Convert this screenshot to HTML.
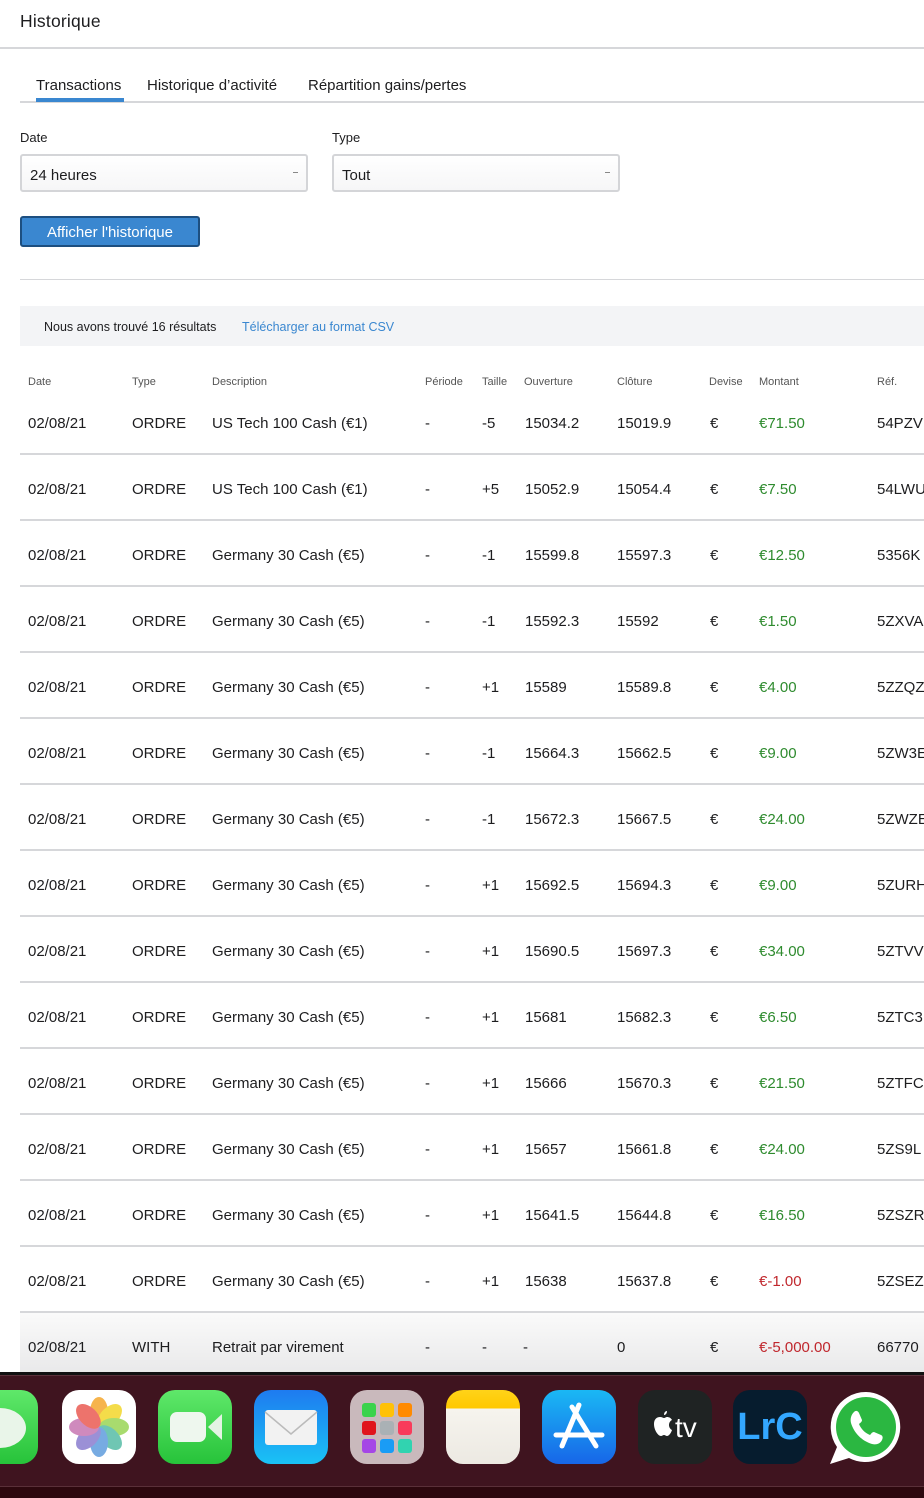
<!DOCTYPE html>
<html><head><meta charset="utf-8"><style>
*{margin:0;padding:0;box-sizing:border-box}
body{width:924px;height:1498px;overflow:hidden;background:#fff;font-family:"Liberation Sans",sans-serif;color:#1d1d1f;position:relative}
.a{position:absolute;white-space:nowrap}
.sel{position:absolute;top:154px;width:288px;height:38px;border:2px solid #d4d5d8;border-radius:3px;background:linear-gradient(#fff,#f6f6f7);font-size:15px;padding:11px 8px}
.sel:after{content:"";position:absolute;right:8px;top:16px;width:5px;height:1px;background:#888}
.row{position:absolute;left:20px;width:904px;height:66px;border-bottom:2px solid #d6d7da;font-size:15px}
.row span,.hd span{position:absolute;top:26px;white-space:nowrap}
.hd{position:absolute;left:20px;top:376px;width:904px;font-size:11px;color:#555}
.hd span{top:0}
.g{color:#2e8b2e}.r{color:#c0272d}
.ic{position:absolute;top:1390px;width:74px;height:74px;border-radius:17px}
</style></head><body>
<div class="a" style="left:20px;top:11px;font-size:17.5px;font-weight:500;letter-spacing:0.2px">Historique</div>
<div class="a" style="left:0;top:47px;width:924px;height:2px;background:#d6d7da"></div>
<div class="a" style="left:36px;top:77px;font-size:15px">Transactions</div>
<div class="a" style="left:147px;top:77px;font-size:15px">Historique d’activité</div>
<div class="a" style="left:308px;top:77px;font-size:15px">Répartition gains/pertes</div>
<div class="a" style="left:20px;top:101px;width:904px;height:2px;background:#d6d7da"></div>
<div class="a" style="left:36px;top:98px;width:88px;height:4px;background:#3a87d0"></div>
<div class="a" style="left:20px;top:130px;font-size:13px">Date</div>
<div class="a" style="left:332px;top:130px;font-size:13px">Type</div>
<div class="sel" style="left:20px">24 heures</div>
<div class="sel" style="left:332px">Tout</div>
<div class="a" style="left:20px;top:216px;width:180px;height:31px;background:#3a87d0;border:2px solid #1d4f80;border-radius:3px;color:#fff;font-size:15px;text-align:center;line-height:29px">Afficher l'historique</div>
<div class="a" style="left:20px;top:279px;width:904px;height:1px;background:#d6d7da"></div>
<div class="a" style="left:20px;top:306px;width:904px;height:40px;background:#f3f4f6"></div>
<div class="a" style="left:44px;top:320px;font-size:12.5px">Nous avons trouvé 16 résultats</div>
<div class="a" style="left:242px;top:320px;font-size:12.5px;color:#3a87d0">Télécharger au format CSV</div>
<div class="hd"><span style="left:8px">Date</span><span style="left:112px">Type</span><span style="left:192px">Description</span><span style="left:405px">Période</span><span style="left:462px">Taille</span><span style="left:504px">Ouverture</span><span style="left:597px">Clôture</span><span style="left:689px">Devise</span><span style="left:739px">Montant</span><span style="left:857px">Réf.</span></div>
<div id="rows"></div>
<div class="a" style="left:0;top:1372px;width:924px;height:3px;background:#111"></div>
<div class="a" style="left:0;top:1375px;width:924px;height:112px;background:#3f141f;border-top:1px solid #5a3039;border-bottom:1px solid #5a3039"></div>
<div class="a" style="left:0;top:1487px;width:924px;height:11px;background:#2d080e"></div>
<div class="ic" style="left:-36px;background:linear-gradient(#5fe86a,#27c33a)"><div style="position:absolute;left:10px;top:18px;width:52px;height:40px;border-radius:50%;background:#e9f5e9"></div></div>
<div class="ic" style="left:62px;background:#fff"><svg width="74" height="74" viewBox="0 0 74 74"><g transform="translate(37,37)" opacity=".75"><ellipse rx="9" ry="15" cy="-15" fill="#f39c12"/><ellipse rx="9" ry="15" cy="-15" fill="#f1d10e" transform="rotate(45)"/><ellipse rx="9" ry="15" cy="-15" fill="#8ccf3e" transform="rotate(90)"/><ellipse rx="9" ry="15" cy="-15" fill="#3fb39a" transform="rotate(135)"/><ellipse rx="9" ry="15" cy="-15" fill="#4a90d9" transform="rotate(180)"/><ellipse rx="9" ry="15" cy="-15" fill="#7a6cc9" transform="rotate(225)"/><ellipse rx="9" ry="15" cy="-15" fill="#c063a8" transform="rotate(270)"/><ellipse rx="9" ry="15" cy="-15" fill="#e8453c" transform="rotate(315)"/></g></svg></div>
<div class="ic" style="left:158px;background:linear-gradient(#5fe86a,#27c33a)"><div style="position:absolute;left:12px;top:22px;width:36px;height:30px;border-radius:7px;background:#eef7ee"></div><div style="position:absolute;left:50px;top:24px;width:0;height:0;border-top:13px solid transparent;border-bottom:13px solid transparent;border-right:14px solid #e4f3e4"></div></div>
<div class="ic" style="left:254px;background:linear-gradient(#1e7bf0,#1ac2f5)"><svg width="74" height="74"><rect x="11" y="20" width="52" height="35" rx="3" fill="#f2f2f2"/><path d="M11 22 L37 44 L63 22" stroke="#bbb" fill="none" stroke-width="1.5"/></svg></div>
<div class="ic" style="left:350px;background:#c9b9bc"><svg width="74" height="74"><rect x="12" y="13" width="14" height="14" rx="3" fill="#3bd34c"/><rect x="30" y="13" width="14" height="14" rx="3" fill="#ffc107"/><rect x="48" y="13" width="14" height="14" rx="3" fill="#ff8a00"/><rect x="12" y="31" width="14" height="14" rx="3" fill="#e0141c"/><rect x="30" y="31" width="14" height="14" rx="3" fill="#aab1b5"/><rect x="48" y="31" width="14" height="14" rx="3" fill="#f93b5b"/><rect x="12" y="49" width="14" height="14" rx="3" fill="#a546e6"/><rect x="30" y="49" width="14" height="14" rx="3" fill="#1a9cf5"/><rect x="48" y="49" width="14" height="14" rx="3" fill="#31d3b0"/></svg></div>
<div class="ic" style="left:446px;background:linear-gradient(#ffd319 0,#ffc800 18px,#f6f4ee 19px,#ece9e2)"></div>
<div class="ic" style="left:542px;background:linear-gradient(#1ab8f4,#1766e8)"><svg width="74" height="74"><path d="M37 15 L20 56 M30 17 L54 56 M14 45 L60 45" stroke="#fff" stroke-width="5" stroke-linecap="round" fill="none"/></svg></div>
<div class="ic" style="left:638px;background:#1f2323"><svg width="74" height="74"><path d="M22 27c-3 0-6 2-6 7 0 6 4 12 7 12 1 0 2-1 3-1s2 1 3 1c2 0 4-3 5-6-2-1-3-3-3-5 0-2 1-4 3-5-1-2-3-3-5-3-1 0-2 1-3 1s-2-1-4-1zM26 25c0-2 1-4 3-4 0 2-1 4-3 4z" fill="#fff"/><text x="37" y="47" fill="#fff" font-family="Liberation Sans" font-size="28">tv</text></svg></div>
<div class="ic" style="left:733px;background:#061c2e;color:#33a7ff;font-size:38px;font-weight:bold;text-align:center;line-height:74px">LrC</div>
<div class="ic" style="left:826px;top:1388px;width:80px;height:80px;background:none"><svg width="80" height="80"><path d="M40 4a35 35 0 1 1-17 66L4 76l7-17A35 35 0 0 1 40 4z" fill="#fff"/><circle cx="40" cy="39" r="30" fill="#2bb741"/><path d="M28 24c2-2 4-1 5 1l3 7c0 2-2 3-3 4 2 5 6 9 11 11 1-1 2-3 4-3l7 3c2 1 2 3 1 5-2 4-6 5-10 4-10-3-18-11-21-21-1-4 0-8 3-11z" fill="#fff"/></svg></div>
<script>
const d=[["ORDRE","US Tech 100 Cash (€1)","-5","15034.2","15019.9","€71.50","54PZV"],["ORDRE","US Tech 100 Cash (€1)","+5","15052.9","15054.4","€7.50","54LWU"],["ORDRE","Germany 30 Cash (€5)","-1","15599.8","15597.3","€12.50","5356K"],["ORDRE","Germany 30 Cash (€5)","-1","15592.3","15592","€1.50","5ZXVA"],["ORDRE","Germany 30 Cash (€5)","+1","15589","15589.8","€4.00","5ZZQZ"],["ORDRE","Germany 30 Cash (€5)","-1","15664.3","15662.5","€9.00","5ZW3E"],["ORDRE","Germany 30 Cash (€5)","-1","15672.3","15667.5","€24.00","5ZWZE"],["ORDRE","Germany 30 Cash (€5)","+1","15692.5","15694.3","€9.00","5ZURH"],["ORDRE","Germany 30 Cash (€5)","+1","15690.5","15697.3","€34.00","5ZTVV"],["ORDRE","Germany 30 Cash (€5)","+1","15681","15682.3","€6.50","5ZTC3"],["ORDRE","Germany 30 Cash (€5)","+1","15666","15670.3","€21.50","5ZTFC"],["ORDRE","Germany 30 Cash (€5)","+1","15657","15661.8","€24.00","5ZS9L"],["ORDRE","Germany 30 Cash (€5)","+1","15641.5","15644.8","€16.50","5ZSZR"],["ORDRE","Germany 30 Cash (€5)","+1","15638","15637.8","€-1.00","5ZSEZ"],["WITH","Retrait par virement","-","-","0","€-5,000.00","66770"]];
let h="";d.forEach((r,i)=>{const y=389+i*66;const c=r[5].includes("-")?"r":"g";
const last=i==14;
h+=`<div class="row" style="top:${y}px;${last?'background:linear-gradient(#fafafa,#e9e9ea);border:none;height:60px':''}"><span style="left:8px">02/08/21</span><span style="left:112px">${r[0]}</span><span style="left:192px">${r[1]}</span><span style="left:405px">-</span><span style="left:${last?462:462}px">${r[2]}</span><span style="left:${last?503:505}px">${r[3]}</span><span style="left:597px">${r[4]}</span><span style="left:690px">€</span><span class="${c}" style="left:739px">${r[5]}</span><span style="left:857px">${r[6]}</span></div>`});
document.getElementById("rows").innerHTML=h;
</script>
</body></html>
